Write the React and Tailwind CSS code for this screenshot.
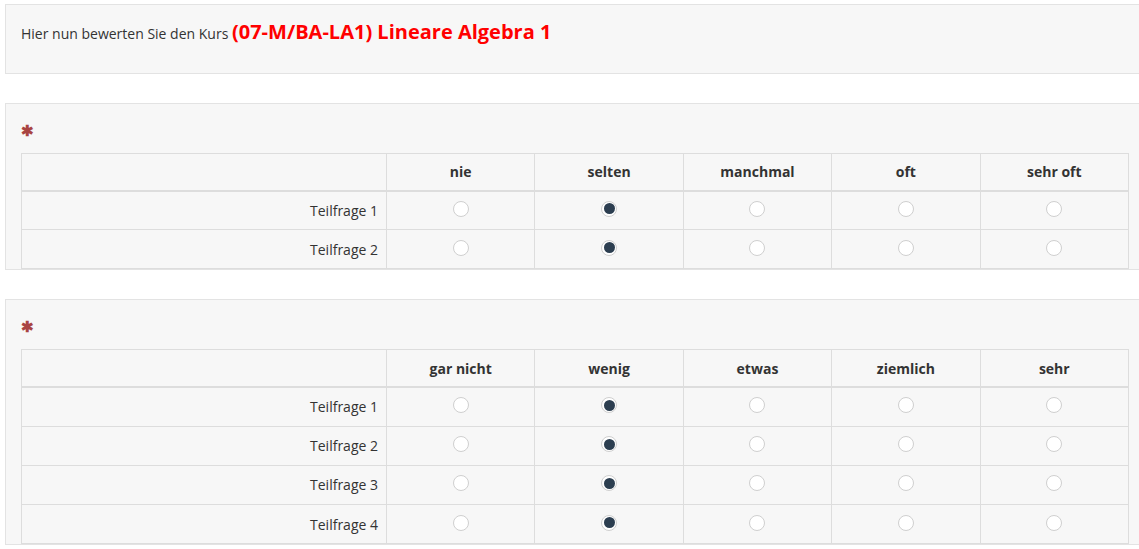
const cols1 = ["nie", "selten", "manchmal", "oft", "sehr oft"];
const cols2 = ["gar nicht", "wenig", "etwas", "ziemlich", "sehr"];

function Radio({ checked }) {
    return (
        <span className="inline-flex items-center justify-center w-[16px] h-[16px] rounded-full border border-[#cfcfcf] bg-white">
            {checked && <span className="w-[11px] h-[11px] rounded-full bg-[#2c3e50]" />}
        </span>
    );
}

function Matrix({ cols, rows }) {
    return (
        <table className="w-[1108px] border-collapse table-fixed text-[14px] text-[#333]">
            <colgroup>
                <col className="w-[365px]" />
                {cols.map((c) => (
                    <col key={c} />
                ))}
            </colgroup>
            <thead>
                <tr className="h-[37px]">
                    <th className="border border-[#ddd] border-b-2" />
                    {cols.map((c) => (
                        <th key={c} className="border border-[#ddd] border-b-2 font-bold text-center">
                            {c}
                        </th>
                    ))}
                </tr>
            </thead>
            <tbody>
                {rows.map((r) => (
                    <tr key={r} className="h-[39.2px]">
                        <td className="border border-[#ddd] text-right pr-[8px]">{r}</td>
                        {cols.map((c, i) => (
                            <td key={c} className="border border-[#ddd] text-center align-middle">
                                <div className="flex justify-center -mt-[3px]">
                                    <Radio checked={i === 1} />
                                </div>
                            </td>
                        ))}
                    </tr>
                ))}
            </tbody>
        </table>
    );
}

function Question({ cols, rows }) {
    return (
        <div className="bg-[#f7f7f7] border border-[#e3e3e3] w-[1140px] pl-[15px] pt-[15px]">
            <div className="h-[34px] text-[#a94442] text-[15px] leading-[22px] font-bold">✱</div>
            <Matrix cols={cols} rows={rows} />
        </div>
    );
}

export default function App() {
    return (
        <div
            className="w-[1139px] h-[549px] overflow-hidden bg-white pl-[5px] pt-[4px] flex flex-col gap-[29px]"
            style={{ fontFamily: '"Open Sans", "Noto Sans", sans-serif' }}
        >
            <div className="bg-[#f7f7f7] border border-[#e3e3e3] w-[1140px] h-[70px] pl-[15px] pt-[13px]">
                <p className="text-[14px] leading-[28px] text-[#333]">
                    Hier nun bewerten Sie den Kurs{" "}
                    <span className="text-[20px] font-bold text-[#ff0000]">(07-M/BA-LA1) Lineare Algebra 1</span>
                </p>
            </div>
            <Question cols={cols1} rows={["Teilfrage 1", "Teilfrage 2"]} />
            <Question cols={cols2} rows={["Teilfrage 1", "Teilfrage 2", "Teilfrage 3", "Teilfrage 4"]} />
        </div>
    );
}
